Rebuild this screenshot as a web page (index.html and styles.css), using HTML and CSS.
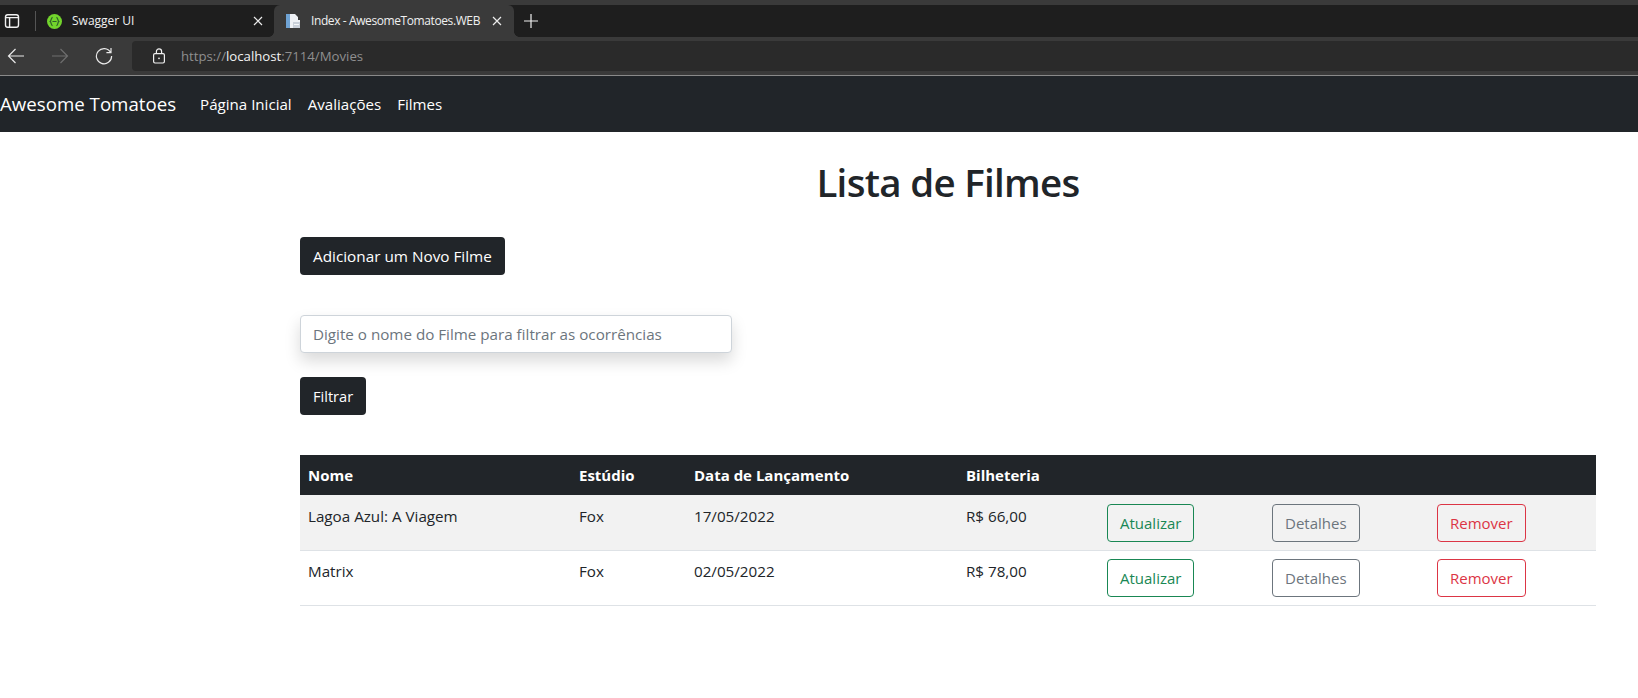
FILE: index.html
```html
<!DOCTYPE html>
<html lang="pt-BR">
<head>
    <meta charset="UTF-8">
    <meta name="viewport" content="width=device-width, initial-scale=1.0">
    <title>Index - AwesomeTomatoes.WEB</title>
    <link rel="stylesheet" href="styles.css">
</head>
<body>
    <!-- Browser chrome -->
    <div class="tab-strip">
        <svg class="icon sidebar-icon" width="16" height="16" viewBox="0 0 16 16" fill="none" stroke="#f0f0f0" stroke-width="1.4">
            <rect x="1.5" y="1.7" width="13" height="12.6" rx="2.2"/>
            <path d="M1.5 4.6h13M5.6 4.6v9.7"/>
        </svg>
        <span class="tab-divider"></span>
        <div class="tab">
            <svg class="icon" width="15" height="15" viewBox="0 0 16 16">
                <circle cx="8" cy="8" r="8" fill="#72d42c"/>
                <path d="M6 3.6C4.2 3.8 4.8 7 3.4 8c1.4 1 .8 4.2 2.6 4.4M10 3.6c1.8.2 1.2 3.4 2.6 4.4-1.4 1-.8 4.2-2.6 4.4M5.8 8h4.4" fill="none" stroke="#2f5f2a" stroke-width="1.3"/>
            </svg>
            <span class="tab-title">Swagger UI</span>
            <svg class="icon" width="10" height="10" viewBox="0 0 10 10" stroke="#ececec" stroke-width="1.2">
                <path d="M1 1l8 8M9 1L1 9"/>
            </svg>
        </div>
        <div class="tab tab-active">
            <svg class="icon" width="16" height="16" viewBox="0 0 16 16">
                <path d="M1 1h9l3 3v3h2v8H1z" fill="#eef1f5"/>
                <path d="M1 1h4v14H1z" fill="#6fa3d4"/>
                <rect x="8" y="9" width="7" height="6" fill="#c9d0d9"/>
                <path d="M9 11.5h5" stroke="#f4f6f8" stroke-width="1"/>
            </svg>
            <span class="tab-title">Index - AwesomeTomatoes.WEB</span>
            <svg class="icon" width="10" height="10" viewBox="0 0 10 10" stroke="#ececec" stroke-width="1.2">
                <path d="M1 1l8 8M9 1L1 9"/>
            </svg>
        </div>
        <svg class="icon" width="14" height="14" viewBox="0 0 14 14" stroke="#f0f0f0" stroke-width="1.2">
            <path d="M7 0v14M0 7h14"/>
        </svg>
    </div>
    <div class="toolbar">
        <svg class="icon" width="18" height="18" viewBox="0 0 18 18" fill="none" stroke="#e8e8e8" stroke-width="1.2">
            <path d="M17 9H1.5M8.5 2 1.5 9l7 7"/>
        </svg>
        <svg class="icon" width="18" height="18" viewBox="0 0 18 18" fill="none" stroke="#6e6e6e" stroke-width="1.2">
            <path d="M1 9h15.5M9.5 2l7 7-7 7"/>
        </svg>
        <svg class="icon" width="18" height="18" viewBox="0 0 18 18" fill="none" stroke="#e8e8e8" stroke-width="1.2">
            <path d="M15.6 5.4A7.6 7.6 0 1 0 16.6 9M16 1v4.6h-4.6"/>
        </svg>
        <div class="address-bar">
            <svg class="icon" width="14" height="16" viewBox="0 0 14 16" fill="none" stroke="#f0f0f0" stroke-width="1.2">
                <rect x="1.6" y="5.6" width="10.8" height="9.4" rx="1.4"/>
                <path d="M4.4 5.6V3.4a2.6 2.6 0 0 1 5.2 0v2.2"/>
                <circle cx="7" cy="10.3" r=".9" fill="#f0f0f0" stroke="none"/>
            </svg>
            <span class="url">https://<b>localhost</b>:7114/Movies</span>
        </div>
    </div>

    <!-- Navbar -->
    <nav class="navbar">
        <a class="brand" href="#">Awesome Tomatoes</a>
        <a class="nav-link" href="#">Página Inicial</a>
        <a class="nav-link" href="#">Avaliações</a>
        <a class="nav-link" href="#">Filmes</a>
    </nav>

    <main class="container">
        <h1 class="page-title">Lista de Filmes</h1>
        <button class="btn btn-dark btn-add">Adicionar um Novo Filme</button>
        <input class="filter-input" type="text" placeholder="Digite o nome do Filme para filtrar as ocorrências">
        <button class="btn btn-dark btn-filter">Filtrar</button>

        <table class="movies-table">
            <colgroup>
                <col class="col-name"><col class="col-studio"><col class="col-date"><col class="col-box"><col class="col-action"><col class="col-action"><col>
            </colgroup>
            <thead>
                <tr>
                    <th>Nome</th>
                    <th>Estúdio</th>
                    <th>Data de Lançamento</th>
                    <th>Bilheteria</th>
                    <th></th>
                    <th></th>
                    <th></th>
                </tr>
            </thead>
            <tbody>
                <tr class="striped">
                    <td>Lagoa Azul: A Viagem</td>
                    <td>Fox</td>
                    <td>17/05/2022</td>
                    <td>R$ 66,00</td>
                    <td><button class="btn btn-outline-success">Atualizar</button></td>
                    <td><button class="btn btn-outline-secondary">Detalhes</button></td>
                    <td><button class="btn btn-outline-danger">Remover</button></td>
                </tr>
                <tr>
                    <td>Matrix</td>
                    <td>Fox</td>
                    <td>02/05/2022</td>
                    <td>R$ 78,00</td>
                    <td><button class="btn btn-outline-success">Atualizar</button></td>
                    <td><button class="btn btn-outline-secondary">Detalhes</button></td>
                    <td><button class="btn btn-outline-danger">Remover</button></td>
                </tr>
            </tbody>
        </table>
    </main>
</body>
</html>
```

FILE: styles.css
```css
* {
    box-sizing: border-box;
}

body {
    margin: 0;
    font-family: "Open Sans", "Noto Sans", sans-serif;
    font-size: 16px;
    line-height: 24px;
    color: #212529;
    background-color: #fff;
}

.icon {
    flex: none;
    display: block;
}

/* Browser chrome */
.tab-strip {
    display: flex;
    align-items: center;
    height: 37px;
    padding-left: 4px;
    background-color: #1e1e1e;
    border-top: 5px solid #3a3a3a;
}

.sidebar-icon {
    margin-right: 15px;
}

.tab-divider {
    width: 1px;
    height: 20px;
    background-color: #555;
    margin-right: 4px;
}

.tab {
    display: flex;
    align-items: center;
    width: 234px;
    height: 32px;
    padding: 0 11px 0 7px;
    color: #f0f0f0;
    font-size: 12px;
}

.tab-title {
    flex: 1;
    margin-left: 10px;
    white-space: nowrap;
}

.tab-active {
    position: relative;
    width: 240px;
    padding: 0 12px 0 11px;
    margin-right: 10px;
    background-color: #3a3a3a;
    border-radius: 6px 6px 0 0;
}

.tab-active .tab-title {
    letter-spacing: -0.4px;
}

/* little flared corners at the foot of the active tab */
.tab-active::before,
.tab-active::after {
    content: "";
    position: absolute;
    bottom: 0;
    width: 5px;
    height: 5px;
}

.tab-active::before {
    left: -5px;
    background: radial-gradient(circle at 0 0, #1e1e1e 4.5px, #3a3a3a 5px);
}

.tab-active::after {
    right: -5px;
    background: radial-gradient(circle at 100% 0, #1e1e1e 4.5px, #3a3a3a 5px);
}

.toolbar {
    display: flex;
    align-items: center;
    gap: 26px;
    height: 38px;
    padding-left: 7px;
    background-color: #3a3a3a;
}

.address-bar {
    display: flex;
    align-items: center;
    flex: 1;
    height: 30px;
    margin-left: -7px;
    padding-left: 20px;
    background-color: #2a2a2a;
    border-radius: 4px 0 0 4px;
}

.url {
    margin-left: 15px;
    font-size: 13.2px;
    color: #8f8f8f;
}

.url b {
    font-weight: 400;
    color: #f2f2f2;
}

/* Navbar */
.navbar {
    display: flex;
    align-items: center;
    height: 57px;
    background-color: #212529;
    border-top: 1px solid #8a8a8a;
}

.brand {
    font-size: 18.7px;
    color: #fff;
    text-decoration: none;
    margin-right: 16px;
}

.nav-link {
    padding: 0 8px;
    font-size: 15.1px;
    color: #fff;
    text-decoration: none;
}

/* Content */
.container {
    display: flex;
    flex-direction: column;
    align-items: flex-start;
    width: 1296px;
    margin-left: 300px;
}

.page-title {
    align-self: stretch;
    margin: 26px 0 31px;
    font-size: 38.5px;
    line-height: 48px;
    font-weight: 600;
    letter-spacing: -0.7px;
    text-align: center;
}

.btn {
    height: 38px;
    padding: 0 12px;
    font-family: inherit;
    font-size: 15px;
    border: 1px solid transparent;
    border-radius: 4px;
    background: transparent;
}

.btn-dark {
    background-color: #212529;
    color: #fff;
}

.btn-add {
    font-size: 15.3px;
}

.btn-filter {
    font-size: 14.6px;
}

.btn-outline-success {
    color: #198754;
    border-color: #198754;
}

.btn-outline-secondary {
    color: #6c757d;
    border-color: #6c757d;
}

.btn-outline-danger {
    color: #dc3545;
    border-color: #dc3545;
}

.filter-input {
    width: 432px;
    height: 38px;
    margin: 40px 0 24px;
    padding: 0 12px;
    font-family: inherit;
    font-size: 15.2px;
    border: 1px solid #ced4da;
    border-radius: 4px;
    box-shadow: 0 8px 16px rgba(0, 0, 0, 0.15);
}

.filter-input::placeholder {
    color: #6c757d;
}

.movies-table {
    width: 100%;
    margin-top: 40px;
    border-collapse: separate;
    border-spacing: 0;
    table-layout: fixed;
    font-size: 15.2px;
}

.col-name { width: 271px; }
.col-studio { width: 115px; }
.col-date { width: 272px; }
.col-box { width: 141px; }
.col-action { width: 165px; }

.movies-table th {
    height: 40px;
    padding: 0 8px;
    background-color: #212529;
    color: #fff;
    font-size: 15px;
    font-weight: 700;
    text-align: left;
}

.movies-table td {
    padding: 8px;
    vertical-align: top;
    border-bottom: 1px solid #dee2e6;
}

.movies-table td .btn {
    display: block;
}

.striped td {
    padding-top: 9px;
    background-color: #f2f2f2;
}
```
